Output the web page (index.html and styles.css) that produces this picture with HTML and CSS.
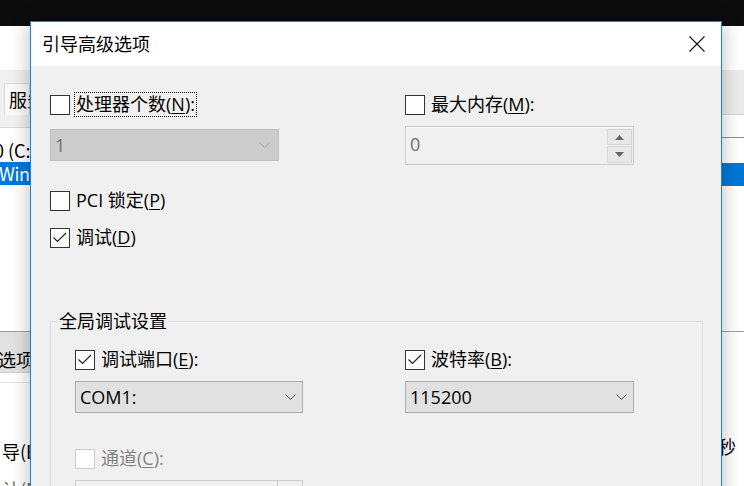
FILE: index.html
```html
<!DOCTYPE html>
<html lang="zh-CN">
<head>
<meta charset="utf-8">
<title>引导高级选项</title>
<link rel="stylesheet" href="styles.css">
</head>
<body>
<div class="screen">
  <div class="topbar"></div>
  <div class="bg">
    <div class="bg-left">
      <div class="bl-white"></div>
      <div class="bl-tabs"><div class="tab">服务</div></div>
      <div class="bl-list">
        <div class="li li-first">10 (C:</div>
        <div class="li li-sel">Wind</div>
      </div>
      <div class="bl-btnrow"><span class="bl-btn-text">选项(</span></div>
      <div class="bl-gap"></div>
      <div class="bl-opt">导(B</div>
      <div class="bl-opt2">认(M</div>
    </div>
    <div class="bg-mid"></div>
    <div class="bg-right">
      <div class="br-white"></div>
      <div class="br-grey"></div>
      <div class="br-a"></div>
      <div class="br-b"></div>
      <div class="br-sel"></div>
      <div class="br-c"></div>
      <div class="br-sec">秒</div>
    </div>
  </div>

  <div class="dialog">
    <div class="titlebar">
      <span class="title">引导高级选项</span>
      <svg class="close" width="16" height="16" viewBox="0 0 16 16"><path d="M0.5 0.5L15.5 15.5M15.5 0.5L0.5 15.5" stroke="#111" stroke-width="1.1" fill="none"/></svg>
    </div>
    <div class="client">
      <div class="top-grid">
        <div class="col">
          <div class="check"><span class="box"></span><span class="text focus">处理器个数(<u>N</u>):</span></div>
          <div class="combo combo-disabled combo-cpu"><span class="val">1</span><svg class="chev" width="11" height="6" viewBox="0 0 11 6"><polyline points="0.5,0.5 5.5,5.5 10.5,0.5" fill="none" stroke="#a8a8a8" stroke-width="1"/></svg></div>
          <div class="check row-pci"><span class="box"></span><span class="text">PCI 锁定(<u>P</u>)</span></div>
          <div class="check row-dbg"><span class="box"><svg width="18" height="18" viewBox="0 0 18 18"><polyline points="2.5,8.5 6.5,12.5 15,4" fill="none" stroke="#222" stroke-width="1.2"/></svg></span><span class="text">调试(<u>D</u>)</span></div>
        </div>
        <div class="col">
          <div class="check"><span class="box"></span><span class="text">最大内存(<u>M</u>):</span></div>
          <div class="spin">
            <span class="spin-val">0</span>
            <div class="spin-btns">
              <span class="sb"><svg width="9" height="5" viewBox="0 0 9 5"><polygon points="0,5 4.5,0 9,5" fill="#666"/></svg></span>
              <span class="sb"><svg width="9" height="5" viewBox="0 0 9 5"><polygon points="0,0 4.5,5 9,0" fill="#666"/></svg></span>
            </div>
          </div>
        </div>
      </div>

      <fieldset class="group">
        <legend>全局调试设置</legend>
        <div class="group-grid">
          <div class="col">
            <div class="check"><span class="box"><svg width="18" height="18" viewBox="0 0 18 18"><polyline points="2.5,8.5 6.5,12.5 15,4" fill="none" stroke="#222" stroke-width="1.2"/></svg></span><span class="text">调试端口(<u>E</u>):</span></div>
            <div class="combo combo-com"><span class="val">COM1:</span><svg class="chev" width="11" height="6" viewBox="0 0 11 6"><polyline points="0.5,0.5 5.5,5.5 10.5,0.5" fill="none" stroke="#555" stroke-width="1"/></svg></div>
            <div class="check check-disabled row-chan"><span class="box"></span><span class="text">通道(<u>C</u>):</span></div>
            <div class="edit-combo"><span class="ec-btn"></span></div>
          </div>
          <div class="col">
            <div class="check"><span class="box"><svg width="18" height="18" viewBox="0 0 18 18"><polyline points="2.5,8.5 6.5,12.5 15,4" fill="none" stroke="#222" stroke-width="1.2"/></svg></span><span class="text">波特率(<u>B</u>):</span></div>
            <div class="combo combo-baud"><span class="val">115200</span><svg class="chev" width="11" height="6" viewBox="0 0 11 6"><polyline points="0.5,0.5 5.5,5.5 10.5,0.5" fill="none" stroke="#555" stroke-width="1"/></svg></div>
          </div>
        </div>
      </fieldset>
    </div>
  </div>
</div>
</body>
</html>
```

FILE: styles.css
```css
* { box-sizing: border-box; }
html, body { margin: 0; padding: 0; }
body {
  width: 744px;
  height: 486px;
  overflow: hidden;
  background: #fff;
  font-family: "Open Sans", "Noto Sans CJK SC", sans-serif;
  font-size: 18px;
  line-height: 24px;
  color: #000;
}
.screen { position: relative; width: 744px; height: 486px; overflow: hidden; }
.topbar { height: 26px; background: #0c0c0c; }

/* background window */
.bg { display: grid; grid-template-columns: 30px 1fr 30px; height: 460px; }
.bg-left { overflow: hidden; white-space: nowrap; font-family: "Noto Sans CJK SC", sans-serif; }
.bl-white { height: 44px; background: #fff; }
.bl-tabs { height: 58px; background: #f0f0f0; padding: 13px 0 0 4px; border-bottom: 1px solid #d9d9d9; }
.tab { height: 32px; background: #fafafa; border: 1px solid #d9d9d9; border-bottom: none; padding: 3px 0 0 4px; }
.bl-list { height: 204px; background: #fff; padding-top: 10px; border-bottom: 1px solid #a0a0a0; }
.li { height: 24px; line-height: 24px; }
.li-first { text-indent: -16px; }
.li-sel { height: 23px; background: #0078d7; color: #fff; text-indent: -1px; letter-spacing: -0.4px; line-height: 23px; }
.bl-btnrow { height: 41px; background: #e1e1e1; border-bottom: 1px solid #cfcfcf; padding-top: 15px; }
.bl-btn-text { display: block; text-indent: -2px; }
.bl-gap { height: 10px; border-bottom: 1px solid #e3e3e3; }
.bl-opt { margin-top: 56px; padding-left: 2px; }
.bl-opt2 { margin-top: 14px; padding-left: 2px; color: #6d6d6d; }

.bg-right { overflow: hidden; white-space: nowrap; font-family: "Noto Sans CJK SC", sans-serif; }
.br-white { height: 44px; background: #fff; }
.br-grey { height: 45px; background: #ececec; border-bottom: 1px solid #d4d4d4; }
.br-a { height: 23px; background: #fff; border-bottom: 1px solid #8e8e8e; }
.br-b { height: 25px; background: #fff; }
.br-sel { height: 23px; background: #0078d7; }
.br-c { height: 146px; background: #fff; border-bottom: 1px solid #a0a0a0; }
.br-sec { margin-top: 102px; padding-left: 4px; }

/* dialog */
.dialog {
  position: absolute;
  left: 30px;
  top: 21px;
  width: 692px;
  height: 490px;
  border: 1px solid #1883d7;
  background: #f0f0f0;
  box-shadow: 0 0 18px rgba(0, 0, 0, 0.28);
}
.titlebar {
  height: 44px;
  background: #fff;
  display: flex;
  align-items: center;
  justify-content: space-between;
  padding: 0 16px 0 11px;
}
.title { font-size: 18px; }
.close { display: block; }

.client { padding: 26px 18px 0 19px; }
.top-grid { display: grid; grid-template-columns: 355px 1fr; }
.col { display: flex; flex-direction: column; align-items: flex-start; }

.check { display: flex; align-items: center; height: 25px; gap: 4px; }
.box {
  width: 20px;
  height: 20px;
  border: 1px solid #333;
  background: #fff;
  flex: none;
  display: flex;
  align-items: center;
  justify-content: center;
}
.box svg { display: block; }
.text { border: 1px dotted transparent; padding: 0 1px; line-height: 23px; white-space: nowrap; }
.text.focus { border-color: #000; }
u { text-decoration-thickness: 1px; text-underline-offset: 2px; }
.check-disabled .box { border-color: #cccccc; }
.check-disabled .text { color: #838383; }

.combo {
  display: flex;
  align-items: center;
  justify-content: space-between;
  height: 32px;
  border: 1px solid #adadad;
  background: #e1e1e1;
  padding: 0 6px 0 4px;
}
.combo .chev { display: block; }
.combo-disabled { background: #cccccc; border-color: #bfbfbf; color: #6d6d6d; padding-right: 8px; }
.combo-cpu { width: 229px; margin-top: 12px; }
.row-pci { margin-top: 27px; }
.row-dbg { margin-top: 12px; }

.spin {
  width: 229px;
  height: 39px;
  margin-top: 9px;
  border: 1px solid #c9c9c9;
  background: #f0f0f0;
  box-shadow: inset 1px 1px 0 #fafafa;
  display: flex;
  align-items: flex-start;
  padding: 0 1px 0 4px;
}
.spin-val { color: #6d6d6d; padding-top: 5px; }
.spin-btns { margin-left: auto; margin-top: 2px; display: flex; flex-direction: column; gap: 1px; }
.sb {
  width: 25px;
  height: 16px;
  background: #e8e8e8;
  border: 1px solid #d6d6d6;
  display: flex;
  align-items: center;
  justify-content: center;
}
.sb + .sb { height: 17px; }
.sb svg { display: block; }

.group {
  margin: 59px 0 0 0;
  padding: 0;
  border: 1px solid #dcdcdc;
  min-width: 0;
  height: 200px;
}
.group legend { margin-left: 7px; padding: 0 1px; line-height: 24px; }
.group-grid { display: grid; grid-template-columns: 330px 1fr; padding: 14px 0 0 24px; }
.combo-com { width: 228px; margin-top: 9px; }
.combo-baud { width: 229px; margin-top: 9px; }
.row-chan { margin-top: 33px; }
.edit-combo {
  width: 228px;
  height: 32px;
  margin-top: 9px;
  border: 1px solid #cccccc;
  background: #f0f0f0;
  display: flex;
  justify-content: flex-end;
}
.ec-btn { width: 25px; border-left: 1px solid #cccccc; }
```
